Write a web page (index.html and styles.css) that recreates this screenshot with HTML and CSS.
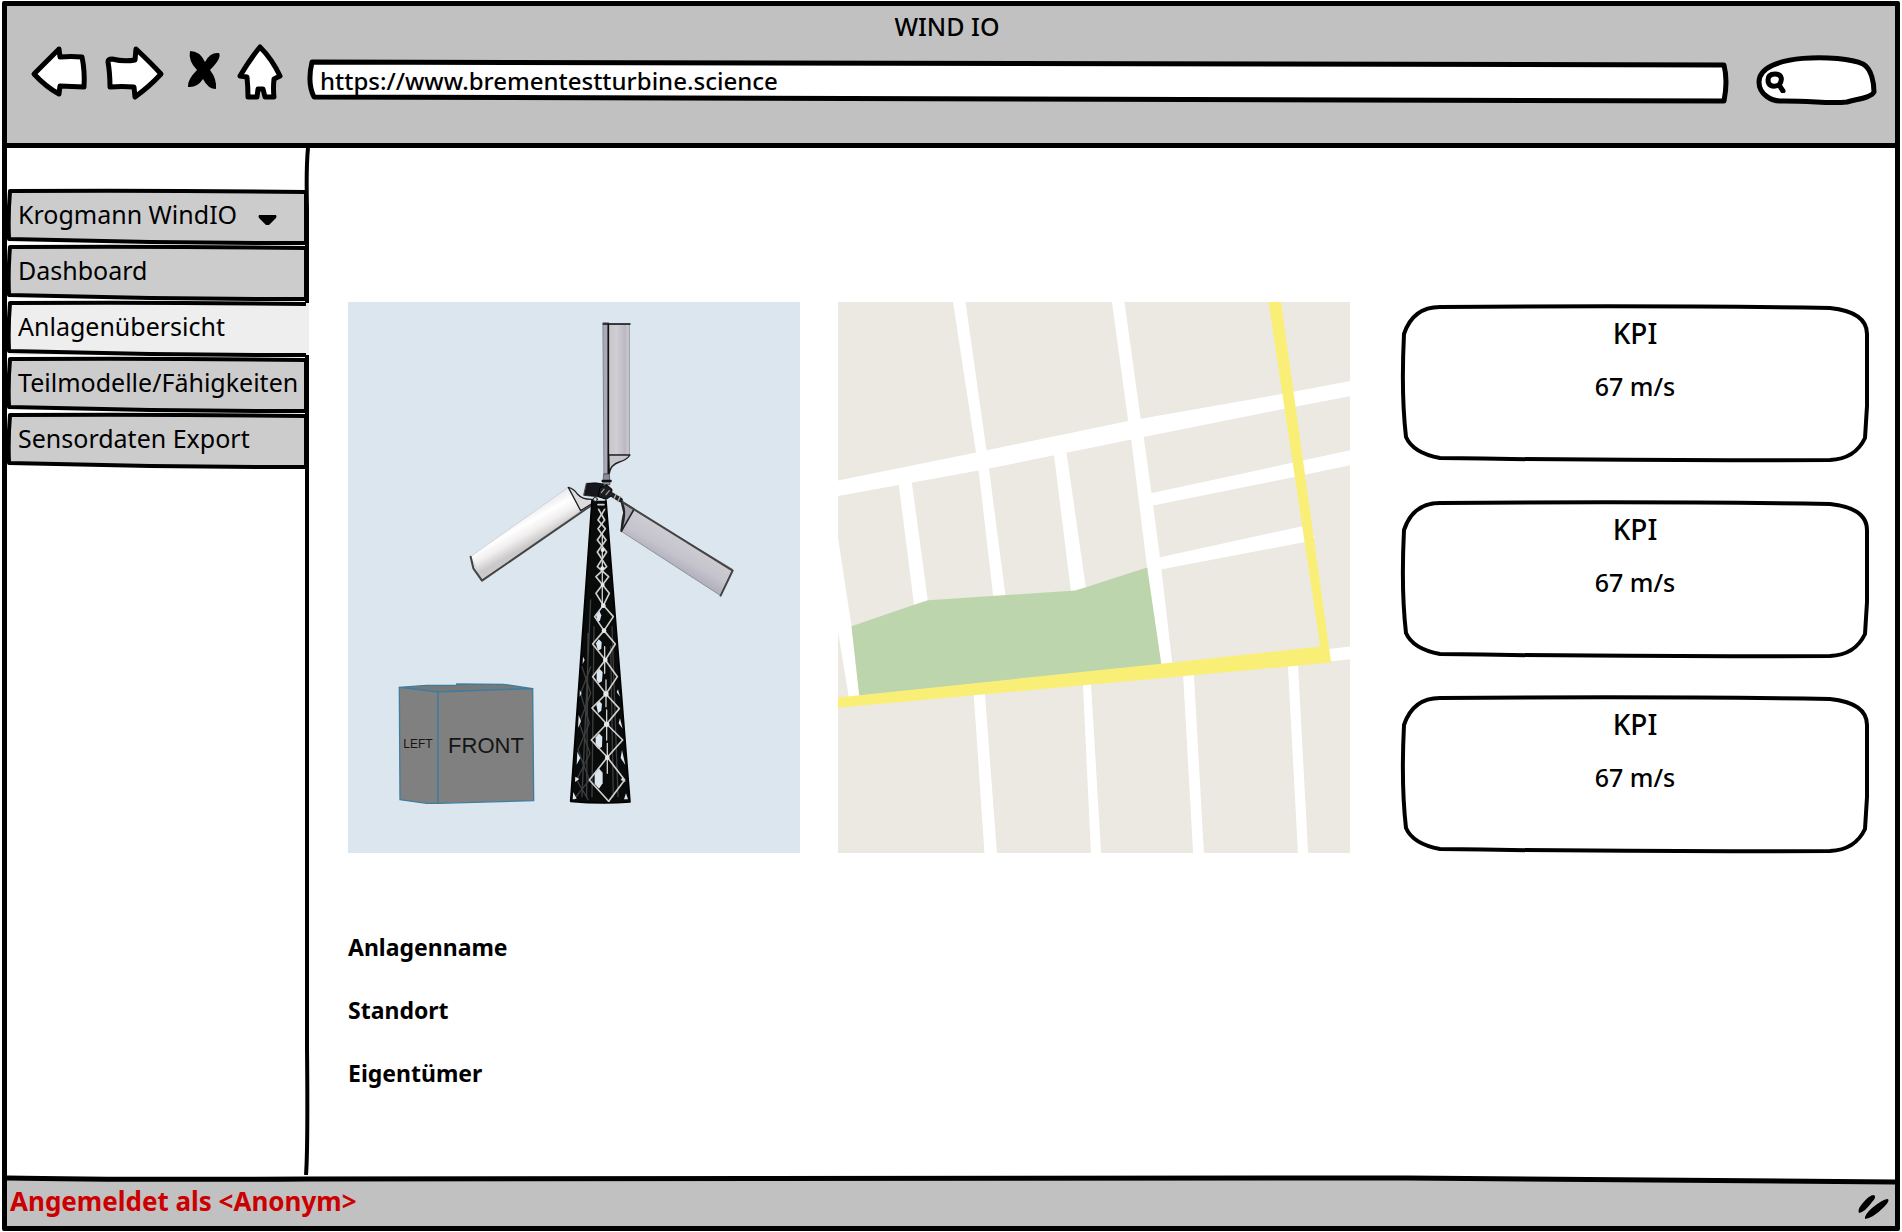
FILE: index.html
```html
<!DOCTYPE html>
<html lang="de">
<head>
<meta charset="utf-8">
<title>WIND IO</title>
<link rel="stylesheet" href="styles.css">
</head>
<body>
<div class="window">
  <header class="chrome">
    <h1 class="chrome-title">WIND IO</h1>
    <div class="toolbar">
      <nav class="nav-buttons" aria-label="Browser">
        <button type="button" aria-label="Zurück">
          <svg class="outline" width="56" height="60" viewBox="32 44 56 60"><path d="M59 50 L34 75 Q46 88 59 95 L60 87 L84 88 Q85 72 82 58 Q71 57 60 58 Z"/></svg>
        </button>
        <button type="button" aria-label="Vor">
          <svg class="outline" width="62" height="60" viewBox="104 44 62 60"><path d="M136 50 Q152 65 161 75 Q150 87 135 98 L134 88 Q122 87 110 88 Q110 74 108 63 Q108 60 112 60 Q124 63 135 61 Z"/></svg>
        </button>
        <button type="button" aria-label="Stopp">
          <svg width="40" height="60" viewBox="182 44 40 60"><path d="M190 52 Q200 52 205 63 Q210 53 219 54 Q222 59 210 71 Q217 80 216 90 Q208 90 203 80 Q197 89 188 88 Q187 81 197 71 Q188 62 190 52 Z"/></svg>
        </button>
        <button type="button" aria-label="Startseite">
          <svg class="outline" width="46" height="60" viewBox="238 44 46 60"><path d="M260 48 Q272 60 280 77 L274 80 Q273 90 274 98 L265 98 L263 90 L258 90 L257 98 L248 98 Q248 88 247 78 L240 77 Q250 60 260 48 Z"/></svg>
        </button>
      </nav>
      <div class="address">
        <svg class="shape" viewBox="0 0 1420 44" preserveAspectRatio="none" aria-hidden="true"><path d="M4 3 Q700 3 1415 6 Q1419 22 1415 42 Q700 42 6 38 Q-1 24 4 3 Z"/></svg>
        <input type="text" aria-label="Adresse" value="https://www.brementestturbine.science">
      </div>
      <div class="search">
        <svg class="shape" viewBox="0 0 120 50" preserveAspectRatio="none" aria-hidden="true"><path d="M2 26 C2 -3 84 -2 106 8 C115 13 117 28 117 36 C114 42 100 43 90 46 C72 48 58 45 27 45 C14 46 2 38 2 26 Z"/></svg>
        <svg class="search-icon" width="22" height="24" viewBox="0 0 22 24" aria-hidden="true"><path d="M14 16 C7 19 3 16 3 11 C3 6 7 5 10 5 C17 5 18 11 14 16 L18 22"/></svg>
        <input type="search" aria-label="Suche">
      </div>
    </div>
  </header>

  <div class="content">
    <aside class="sidebar">
      <svg class="divider" viewBox="0 0 6 1027" preserveAspectRatio="none" aria-hidden="true"><path d="M4 0 Q2 20 3 60 L3 900 Q4 1000 2 1027"/></svg>
      <div class="tab">
        <svg class="shape" viewBox="0 0 300 55" preserveAspectRatio="none" aria-hidden="true"><path d="M2 2 Q150 1 298 3 L298 54 Q150 54 1 50 Q0 26 2 2 Z"/></svg>
        <select aria-label="Anlage"><option>Krogmann WindIO</option></select>
        <svg class="caret" width="20" height="12" viewBox="0 0 20 12" aria-hidden="true"><path d="M1 1 H18 Q19 2 18 4 L11 11 H8 L1 4 Q0 2 1 1 Z"/></svg>
      </div>
      <a class="tab" href="#dashboard">
        <svg class="shape" viewBox="0 0 300 55" preserveAspectRatio="none" aria-hidden="true"><path d="M2 2 Q150 1 298 3 L298 54 Q150 54 1 50 Q0 26 2 2 Z"/></svg>
        <span>Dashboard</span>
      </a>
      <a class="tab tab-active" href="#anlagen" aria-current="page">
        <svg class="shape" viewBox="0 0 300 55" preserveAspectRatio="none" aria-hidden="true"><path class="fill" d="M2 2 H301 V54 H2 Z"/><path class="line" d="M298 3 Q150 1 2 2 Q0 26 1 50 Q150 54 298 54"/></svg>
        <span>Anlagenübersicht</span>
      </a>
      <a class="tab" href="#teilmodelle">
        <svg class="shape" viewBox="0 0 300 55" preserveAspectRatio="none" aria-hidden="true"><path d="M2 2 Q150 1 298 3 L298 54 Q150 54 1 50 Q0 26 2 2 Z"/></svg>
        <span>Teilmodelle/Fähigkeiten</span>
      </a>
      <a class="tab" href="#export">
        <svg class="shape" viewBox="0 0 300 55" preserveAspectRatio="none" aria-hidden="true"><path d="M2 2 Q150 1 298 3 L298 54 Q150 54 1 50 Q0 26 2 2 Z"/></svg>
        <span>Sensordaten Export</span>
      </a>
    </aside>

    <main class="main">
      <section class="overview">
        <svg class="picture" viewBox="0 0 452 551" role="img" aria-label="3D-Modell der Windkraftanlage">
          <defs>
            <linearGradient id="blade-top" x1="0" x2="1" y1="0" y2="0"><stop offset="0" stop-color="#c9c7cd"/><stop offset=".4" stop-color="#d0ced2"/><stop offset=".8" stop-color="#bab8c4"/><stop offset="1" stop-color="#d2d0d6"/></linearGradient>
            <linearGradient id="blade-left" gradientUnits="userSpaceOnUse" x1="170" y1="170" x2="215" y2="250"><stop offset="0" stop-color="#e9e9f0"/><stop offset=".35" stop-color="#ffffff"/><stop offset=".65" stop-color="#f1efef"/><stop offset="1" stop-color="#cbc9c9"/></linearGradient>
            <linearGradient id="blade-right" gradientUnits="userSpaceOnUse" x1="670" y1="240" x2="630" y2="310"><stop offset="0" stop-color="#cdccd2"/><stop offset=".6" stop-color="#c5c3cc"/><stop offset="1" stop-color="#b4b2c0"/></linearGradient>
          </defs>
          <rect width="452" height="551" fill="#dbe6ee"/>
          <g transform="translate(112 158) scale(.3333)" stroke-linejoin="round" stroke-linecap="round">
            <!-- orientation cube -->
            <g stroke="#3f7d9f" stroke-width="4">
              <path d="M-182 682 L-100 676 L-10 676 L-10 672 L130 673 L218 686 L-66 696 Z" fill="#75797a"/>
              <path d="M-182 682 L-66 696 L-66 1030 L-100 1030 L-180 1019 Z" fill="#808080"/>
              <path d="M-66 696 L218 686 L221 1022 L-66 1030 Z" fill="#808080"/>
            </g>
            <!-- blades -->
            <path d="M430 -412 H446 V42 H433 Z" fill="#a9a9ba" stroke="#555" stroke-width="2"/>
            <path d="M446 -408 H508 V-15 L446 -15 Z" fill="url(#blade-top)" stroke="#777" stroke-width="2"/>
            <path d="M446 -15 H510 Q500 0 478 6 Q452 14 448 40 Z" fill="#c6c6cc" stroke="#222" stroke-width="4"/>
            <path d="M430 -408 H510 M445 -408 V40" fill="none" stroke="#111" stroke-width="5"/>
            <path d="M432 42 H448 L450 74 H430 Z" fill="#8c8c98" stroke="#333" stroke-width="2"/>
            <path d="M428 63 H452" stroke="#111" stroke-width="7"/>
            <path d="M325 82 L32 290 L66 362 L362 152 Z" fill="url(#blade-left)" stroke="#a4a4a8" stroke-width="1"/>
            <path d="M325 82 Q342 86 352 102 Q368 120 400 118 L394 132 L362 152 Z" fill="#dcdcdf" stroke="#222" stroke-width="4"/>
            <path d="M32 290 L40 325 L66 362 L394 136" fill="none" stroke="#444" stroke-width="6"/>
            <path d="M522 150 L818 328 L782 407 L484 214 Z" fill="url(#blade-right)" stroke="#777" stroke-width="2"/>
            <path d="M484 124 L522 148 L484 214 Q486 180 492 158 Z" fill="#a8a8b2" stroke="#222" stroke-width="5"/>
            <path d="M484 124 L818 332 L782 407" fill="none" stroke="#444" stroke-width="6"/>
            <path d="M488 132 Q500 160 484 210" fill="none" stroke="#222" stroke-width="5"/>
            <!-- tower -->
            <path d="M396 122 L438 122 L510 1026 Q420 1032 332 1024 Z" fill="#090a0a"/>
            <g fill="none" stroke="#3d3e40" stroke-width="4">
              <path d="M392 420 L366 1010 M384 520 L380 1010 M456 500 L474 1010 M452 560 L460 1010 M402 500 L396 1010"/>
              <path d="M366 620 L392 700 L358 790 L390 880 L350 960 L384 1018 M392 620 L362 700 L388 790 L354 870 L388 960 L342 1018"/>
            </g>
            <g fill="#dbe6ee">
              <path d="M408 462 L418 452 L424 466 L420 482 L412 486 Z"/>
              <path d="M408 550 L416 538 L425 546 L424 566 L414 572 Z"/>
              <path d="M410 634 L418 626 L428 636 L426 664 L416 670 L410 660 Z"/>
              <path d="M408 730 L418 722 L426 732 L424 752 L414 760 Z"/>
              <path d="M407 832 L417 820 L427 830 L426 860 L415 868 L407 858 Z"/>
              <path d="M404 940 L416 924 L428 938 L428 970 L417 986 L404 972 Z"/>
              <path d="M369 590 L374 600 L368 612 Z M359 690 L365 700 L359 710 Z M356 765 L363 784 L354 804 Z M352 875 L361 894 L350 914 Z M346 950 L358 957 L345 966 Z M340 996 L350 1016 L338 1018 Z"/>
              <path d="M474 688 L480 710 L470 696 Z M480 775 L488 806 L476 790 Z M486 870 L496 915 L482 894 Z M488 952 L497 966 L482 960 Z M498 1000 L504 1018 L492 1018 Z"/>
            </g>
            <g fill="none" stroke="#cfcfcf" stroke-width="5">
              <path d="M414 134 H432 M416 148 L434 180 L414 206 L438 240 L412 276 L440 320 L408 350 L448 400 L430 436"/>
              <path d="M434 148 L414 180 L436 206 L412 240 L440 276 L412 320 L446 350 L408 400 L430 436 L460 470 L432 512 L466 552 L436 600 L472 650 L438 702 L478 746 L440 792 L488 840 L442 892 L494 960 L446 1024"/>
              <path d="M430 436 L404 470 L432 512 L398 552 L436 600 L398 650 L438 702 L396 744 L440 792 L394 840 L442 892 L388 960 L446 1024"/>
              <path d="M427 220 V440 M434 560 V640 M438 660 V740 M440 750 V840 M442 850 V940" stroke-width="4"/>
            </g>
            <g fill="#e8e8e8">
              <circle cx="428" cy="270" r="6"/><circle cx="427" cy="325" r="6"/><circle cx="428" cy="375" r="6"/><circle cx="430" cy="437" r="7"/><circle cx="432" cy="512" r="7"/><circle cx="436" cy="600" r="7"/><circle cx="438" cy="702" r="8"/><circle cx="440" cy="793" r="8"/><circle cx="442" cy="893" r="7"/>
            </g>
            <path d="M396 122 L332 1024 Q420 1032 510 1026 L438 122" fill="none" stroke="#000" stroke-width="5"/>
            <!-- nacelle and hub -->
            <path d="M380 70 Q410 66 430 72 L428 112 L372 106 Z" fill="#15171c" stroke="#000" stroke-width="2"/>
            <path d="M420 84 L440 74 L456 88 L454 108 L438 118 L416 110 Z" fill="#1c1d20" stroke="#000" stroke-width="3"/>
            <path d="M424 98 L432 88 M438 104 L448 92" stroke="#999" stroke-width="4"/>
            <circle cx="406" cy="118" r="6" fill="#ddd" stroke="#222" stroke-width="3"/>
            <path d="M456 104 L482 120" stroke="#222" stroke-width="14"/>
            <path d="M468 104 L462 116 M480 110 L474 124" stroke="#aaa" stroke-width="4"/>
          </g>
          <text class="cube-front" x="138" y="451" text-anchor="middle">FRONT</text>
          <text class="cube-left" x="70" y="446" text-anchor="middle">LEFT</text>
        </svg>

        <svg class="picture" viewBox="0 0 512 551" role="img" aria-label="Karte mit Standort">
          <rect width="512" height="551" fill="#ebe9e1"/>
          <g transform="scale(.3382 .3642) translate(-24 -33)">
            <g fill="#fff">
              <path d="M24 523 L432 446 L882 360 L1340 285 L1538 250 V292 L1340 327 L928 404 L440 496 L24 566 Z"/>
              <path d="M364 33 H401 L463 440 L469 481 L519 838 L483 842 L440 496 L432 446 Z"/>
              <path d="M834 33 H871 L919 355 L928 404 L951 558 L976 734 L1013 1030 H980 L938 762 L890 404 L882 360 Z"/>
              <path d="M203 530 L242 526 L290 856 L249 866 Z"/>
              <path d="M661 440 L698 436 L757 818 L713 830 Z"/>
              <path d="M945 559 L1370 474 L1538 440 V481 L1376 513 L945 594 Z"/>
              <path d="M970 735 L1400 648 L1435 680 L1405 692 L970 769 Z"/>
              <path d="M24 680 L64 923 L87 1116 L56 1118 L24 938 Z"/>
              <path d="M425 1105 H458 L494 1546 H457 Z"/>
              <path d="M748 1080 H772 L802 1546 H772 Z"/>
              <path d="M1044 1050 H1076 L1106 1546 H1074 Z"/>
              <path d="M1354 1025 H1384 L1414 1546 H1384 Z"/>
              <path d="M1476 986 L1538 979 V1014 L1476 1020 Z"/>
            </g>
            <path d="M64 923 L249 864 L290 852 L725 825 L757 816 L938 762 L980 1028 L87 1114 Z" fill="#bdd5ad"/>
            <path d="M1297 33 H1334 L1482 1023 L24 1147 V1119 L980 1026 L1450 979 Z" fill="#faef76"/>
          </g>
        </svg>

        <div class="kpis">
          <article class="kpi">
            <svg class="shape" viewBox="0 0 468 158" preserveAspectRatio="none" aria-hidden="true"><path d="M39 3 Q256 1 429 4 Q466 8 466 30 L466 102 L464 134 Q454 155 429 156 Q230 157 39 154 Q12 149 5 133 Q0 90 3 30 Q12 3 39 3 Z"/></svg>
            <h2>KPI</h2>
            <p>67 m/s</p>
          </article>
          <article class="kpi">
            <svg class="shape" viewBox="0 0 468 158" preserveAspectRatio="none" aria-hidden="true"><path d="M39 3 Q256 1 429 4 Q466 8 466 30 L466 102 L464 134 Q454 155 429 156 Q230 157 39 154 Q12 149 5 133 Q0 90 3 30 Q12 3 39 3 Z"/></svg>
            <h2>KPI</h2>
            <p>67 m/s</p>
          </article>
          <article class="kpi">
            <svg class="shape" viewBox="0 0 468 158" preserveAspectRatio="none" aria-hidden="true"><path d="M39 3 Q256 1 429 4 Q466 8 466 30 L466 102 L464 134 Q454 155 429 156 Q230 157 39 154 Q12 149 5 133 Q0 90 3 30 Q12 3 39 3 Z"/></svg>
            <h2>KPI</h2>
            <p>67 m/s</p>
          </article>
        </div>
      </section>

      <ul class="details">
        <li>Anlagenname</li>
        <li>Standort</li>
        <li>Eigentümer</li>
      </ul>
    </main>
  </div>

  <footer class="status">
    <svg class="shape" viewBox="0 0 1888 51" preserveAspectRatio="none" aria-hidden="true"><path class="fill" d="M0 3 L1400 3 L1888 7 V51 H0 Z"/><path class="line" d="M0 3 Q100 5 300 4 L1400 3 Q1650 4 1888 7"/></svg>
    <p>Angemeldet als &lt;Anonym&gt;</p>
    <svg class="grip" width="34" height="28" viewBox="0 0 34 28" aria-hidden="true"><path d="M2 20 Q0 17 5 11 Q12 2 17 2 Q20 4 15 9 Q8 19 2 20 Z M8 26 Q7 22 15 15 Q26 6 31 6 Q33 8 27 14 Q16 25 8 26 Z"/></svg>
  </footer>
</div>
</body>
</html>
```
FILE: styles.css
```css
* {
  box-sizing: border-box;
}

body {
  margin: 0;
  padding: 1px 2px 1px;
  background: #fff;
  color: #000;
  font-family: "Noto Sans", sans-serif;
  font-size: 25px;
  font-weight: 500;
  line-height: 34px;
}

h1, h2, p, ul {
  margin: 0;
  padding: 0;
  font-size: inherit;
  font-weight: inherit;
}

input, select, button {
  margin: 0;
  padding: 0;
  border: 0;
  background: none;
  color: inherit;
  font: inherit;
  appearance: none;
}

/* Hand-drawn outlines that stretch with their box */
.shape {
  position: absolute;
  inset: 0;
  z-index: -1;
  width: 100%;
  height: 100%;
  overflow: visible;
}

.shape path {
  fill: #fff;
  stroke: #000;
  stroke-width: 4px;
  stroke-linejoin: round;
  vector-effect: non-scaling-stroke;
}

.shape .fill {
  stroke: none;
}

.shape .line {
  fill: none;
}

.window {
  display: flex;
  flex-direction: column;
  min-height: calc(100vh - 2px);
  border: 5px solid #000;
  border-radius: 2px;
}

/* Browser bar */
.chrome {
  padding-bottom: 24px;
  border-bottom: 5px solid #000;
  background: #c1c1c1;
}

.chrome-title {
  padding: 3px 8px 0 0;
  text-align: center;
}

.toolbar {
  display: flex;
  align-items: center;
  height: 76px;
  padding: 0 18px 0 25px;
}

.nav-buttons {
  display: flex;
  gap: 16px;
  padding-bottom: 16px;
}

.nav-buttons svg {
  display: block;
  overflow: visible;
}

.nav-buttons .outline path {
  fill: #fff;
  stroke: #000;
  stroke-width: 5px;
  stroke-linejoin: round;
}

.address {
  position: relative;
  z-index: 0;
  flex: 1;
  height: 44px;
  margin: 0 28px 0 24px;
}

.address .shape path,
.search .shape path {
  stroke-width: 5px;
}

.address input {
  width: 100%;
  height: 42px;
  padding: 0 12px;
  font-size: 24px;
}

.search {
  position: relative;
  z-index: 0;
  display: flex;
  align-items: center;
  width: 120px;
  height: 50px;
  padding: 0 8px;
}

.search input {
  flex: 1;
  min-width: 0;
}

.search-icon path {
  fill: none;
  stroke: #000;
  stroke-width: 5px;
  stroke-linecap: round;
}

/* Sidebar */
.content {
  display: flex;
  flex: 1;
}

.sidebar {
  position: relative;
  z-index: 0;
  display: flex;
  flex-direction: column;
  flex: none;
  gap: 1px;
  width: 303px;
  padding: 41px 2px 0 1px;
  font-weight: 400;
}

.divider {
  position: absolute;
  top: 0;
  right: 0;
  z-index: -1;
  width: 6px;
  height: 100%;
}

.divider path {
  fill: none;
  stroke: #000;
  stroke-width: 4px;
  vector-effect: non-scaling-stroke;
}

.tab {
  position: relative;
  z-index: 0;
  display: flex;
  align-items: center;
  height: 55px;
  padding: 0 30px 6px 10px;
  color: #000;
  text-decoration: none;
  white-space: nowrap;
}

.tab .shape path {
  fill: #ccc;
}

.tab .shape .line {
  fill: none;
}

.tab-active .shape .fill {
  fill: #eee;
}

.tab select {
  flex: 1;
  height: 34px;
}

.caret {
  margin-top: 12px;
}

/* Main area */
.main {
  flex: 1;
  padding: 154px 26px 78px 38px;
}

.overview {
  display: grid;
  grid-template-columns: 452fr 512fr 481fr;
  gap: 38px;
}

.picture {
  display: block;
  width: 100%;
}

.cube-front,
.cube-left {
  fill: #151515;
  font-family: "Liberation Sans Narrow", "Liberation Sans", sans-serif;
  font-size: 22px;
  font-weight: 400;
}

.cube-left {
  font-size: 12px;
}

.kpis {
  display: flex;
  flex-direction: column;
  justify-content: space-between;
  padding: 2px 0 0 13px;
}

.kpi {
  position: relative;
  z-index: 0;
  height: 158px;
  padding-top: 10px;
  text-align: center;
}

.kpi h2 {
  margin-bottom: 17px;
  font-size: 28px;
  line-height: 38px;
}

.details {
  display: flex;
  flex-direction: column;
  gap: 29px;
  margin-top: 77px;
  list-style: none;
  font-size: 23px;
  font-weight: 700;
}

/* Status bar */
.status {
  position: relative;
  z-index: 0;
  display: flex;
  align-items: center;
  justify-content: space-between;
  height: 51px;
  padding: 0 4px 0 3px;
  color: #c00;
  font-size: 26px;
  font-weight: 700;
}

.status .shape path {
  fill: #c1c1c1;
  stroke-width: 5px;
}

.status .shape .line {
  fill: none;
}

.grip {
  margin-top: 12px;
}
```
